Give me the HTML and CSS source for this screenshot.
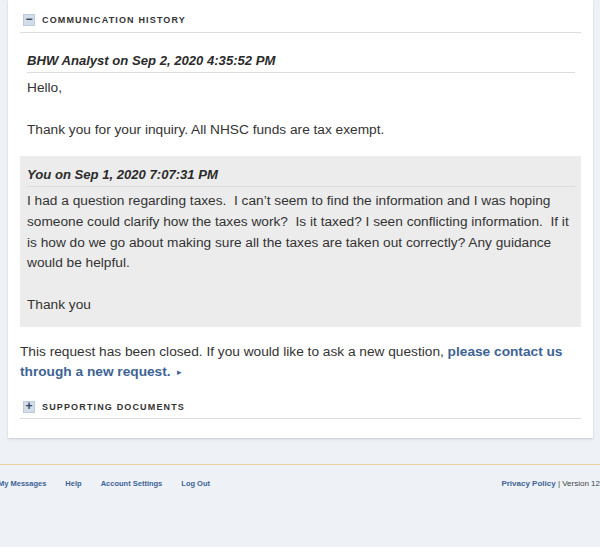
FILE: index.html
```html
<!DOCTYPE html>
<html>
<head>
<meta charset="utf-8">
<link rel="stylesheet" href="styles.css">
</head>
<body>
<div class="card">
  <div class="section-head">
    <span class="toggle">&minus;</span>
    <span class="section-title">COMMUNICATION HISTORY</span>
  </div>

  <div class="message">
    <div class="msg-head">BHW Analyst on Sep 2, 2020 4:35:52 PM</div>
    <div class="msg-body">Hello,<br><br>Thank you for your inquiry. All NHSC funds are tax exempt.</div>
  </div>

  <div class="message mine">
    <div class="msg-head">You on Sep 1, 2020 7:07:31 PM</div>
    <div class="msg-body">I had a question regarding taxes.&nbsp; I can’t seem to find the information and I was hoping someone could clarify how the taxes work?&nbsp; Is it taxed? I seen conflicting information.&nbsp; If it is how do we go about making sure all the taxes are taken out correctly? Any guidance would be helpful.<br><br>Thank you</div>
  </div>

  <p class="closed">This request has been closed. If you would like to ask a new question, <a class="link" href="#">please contact us through a new request.</a><span class="arrow">&#9656;</span></p>

  <div class="section-head last">
    <span class="toggle">+</span>
    <span class="section-title">SUPPORTING DOCUMENTS</span>
  </div>
</div>

<footer class="footer">
  <nav class="foot-nav">
    <a href="#">My Messages</a>
    <a href="#">Help</a>
    <a href="#">Account Settings</a>
    <a href="#">Log Out</a>
  </nav>
  <div class="foot-right"><a href="#">Privacy Policy</a> | Version 12</div>
</footer>
</body>
</html>
```

FILE: styles.css
```css
html, body {
  margin: 0;
  padding: 0;
  overflow: hidden;
}
body {
  background: #eef2f7;
  font-family: "Liberation Sans", Arial, sans-serif;
  color: #333;
  width: 600px;
  height: 547px;
}
.card {
  box-sizing: border-box;
  margin-left: 8px;
  width: 585px;
  background: #fff;
  padding: 8px 12px 19px 12px;
  box-shadow: 0 1px 2px rgba(120, 130, 145, 0.35);
}
.section-head {
  display: flex;
  align-items: center;
  padding: 6px 0 6px 3px;
  border-bottom: 1px solid #dcdcdc;
}
.section-head.last {
  padding-bottom: 5px;
}
.toggle {
  width: 12px;
  height: 12px;
  box-sizing: border-box;
  background: #d3dde9;
  border: 1px solid #bccad9;
  color: #2f4560;
  font-size: 12px;
  line-height: 9px;
  font-weight: bold;
  text-align: center;
  margin-right: 7px;
}
.section-title {
  font-size: 9px;
  font-weight: bold;
  letter-spacing: 1.15px;
  color: #333;
}
.message {
  padding: 20px 6px 0 7px;
}
.msg-head {
  font-size: 13.1px;
  font-weight: bold;
  font-style: italic;
  line-height: 16px;
  padding-bottom: 3px;
  border-bottom: 1px solid #dcdcdc;
  color: #2b2b2b;
}
.msg-body {
  font-size: 13.7px;
  line-height: 21px;
  padding-top: 4px;
}
.message.mine {
  margin-top: 16px;
  background: #ececec;
  padding-top: 11px;
  padding-bottom: 11px;
}
.message.mine .msg-body {
  line-height: 20.8px;
}
.closed {
  margin: 15px 0 13px 0;
  font-size: 13.7px;
  line-height: 20px;
}
.link {
  color: #3d6494;
  font-weight: bold;
  text-decoration: none;
}
.arrow {
  color: #3d6494;
  font-size: 9px;
  margin-left: 6px;
  vertical-align: 1px;
}
.footer {
  margin-top: 26px;
  border-top: 1px solid #e8d2a0;
  display: flex;
  justify-content: space-between;
  align-items: center;
  padding-top: 14px;
  font-size: 7.5px;
}
.foot-nav {
  display: flex;
  gap: 19px;
  margin-left: -2px;
}
.footer a {
  color: #3d6494;
  font-weight: bold;
  text-decoration: none;
}
.foot-right {
  color: #444;
  white-space: nowrap;
  font-size: 8px;
}
```
